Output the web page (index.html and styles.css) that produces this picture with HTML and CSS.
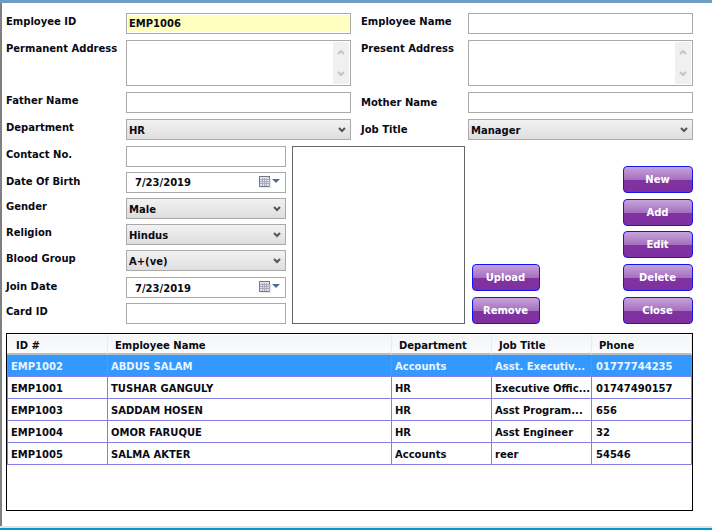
FILE: index.html
```html
<!DOCTYPE html>
<html>

<head>
	<meta charset="utf-8">
	<title>Employee</title>
	<link rel="stylesheet" href="styles.css">
</head>

<body>
	<div class="window">
		<div class="top-edge"></div>

		<div class="content">
			<div class="top-form">
				<label class="lbl">Employee ID</label>
				<input class="field key-field" type="text" value="EMP1006">
				<span></span>
				<label class="lbl">Employee Name</label>
				<input class="field" type="text">

				<label class="lbl">Permanent Address</label>
				<div class="memo">
					<textarea></textarea>
					<div class="memo-scroll">
						<svg width="8" height="6" viewBox="0 0 8 6"><path d="M1 5l3-3 3 3" /></svg>
						<svg width="8" height="6" viewBox="0 0 8 6"><path d="M1 1l3 3 3-3" /></svg>
					</div>
				</div>
				<span></span>
				<label class="lbl">Present Address</label>
				<div class="memo">
					<textarea></textarea>
					<div class="memo-scroll">
						<svg width="8" height="6" viewBox="0 0 8 6"><path d="M1 5l3-3 3 3" /></svg>
						<svg width="8" height="6" viewBox="0 0 8 6"><path d="M1 1l3 3 3-3" /></svg>
					</div>
				</div>

				<label class="lbl">Father Name</label>
				<input class="field" type="text">
				<span></span>
				<label class="lbl lbl-low">Mother Name</label>
				<input class="field" type="text">

				<label class="lbl">Department</label>
				<div class="combo">
					<select><option>HR</option></select>
					<svg class="chev" width="8" height="6" viewBox="0 0 8 6"><path d="M1 1l3 3 3-3" /></svg>
				</div>
				<span></span>
				<label class="lbl lbl-low">Job Title</label>
				<div class="combo">
					<select><option>Manager</option></select>
					<svg class="chev" width="8" height="6" viewBox="0 0 8 6"><path d="M1 1l3 3 3-3" /></svg>
				</div>
			</div>

			<div class="lower">
				<div class="fields">
					<div class="row">
						<label class="lbl">Contact No.</label>
						<input class="field" type="text">
					</div>
					<div class="row">
						<label class="lbl lbl-mid">Date Of Birth</label>
						<div class="date">
							<input type="text" value="7/23/2019">
							<svg class="cal" width="21" height="12" viewBox="0 0 21 12">
								<rect x="0.5" y="0.5" width="10" height="10" fill="#e4e6ee" stroke="#77777c" />
								<path class="cal-grid" d="M1 3.5h9M1 5.5h9M1 7.5h9M3.5 2v8M5.5 2v8M7.5 2v8" />
								<path d="M11 3v9H2" fill="none" stroke="#d4d4d4" />
								<path d="M13 3h8l-4 4z" fill="#4f6d9c" />
							</svg>
						</div>
					</div>
					<div class="row">
						<label class="lbl">Gender</label>
						<div class="combo">
							<select><option>Male</option></select>
							<svg class="chev" width="8" height="6" viewBox="0 0 8 6"><path d="M1 1l3 3 3-3" /></svg>
						</div>
					</div>
					<div class="row">
						<label class="lbl">Religion</label>
						<div class="combo">
							<select><option>Hindus</option></select>
							<svg class="chev" width="8" height="6" viewBox="0 0 8 6"><path d="M1 1l3 3 3-3" /></svg>
						</div>
					</div>
					<div class="row">
						<label class="lbl">Blood Group</label>
						<div class="combo">
							<select><option>A+(ve)</option></select>
							<svg class="chev" width="8" height="6" viewBox="0 0 8 6"><path d="M1 1l3 3 3-3" /></svg>
						</div>
					</div>
					<div class="row row-join">
						<label class="lbl lbl-mid">Join Date</label>
						<div class="date">
							<input type="text" value="7/23/2019">
							<svg class="cal" width="21" height="12" viewBox="0 0 21 12">
								<rect x="0.5" y="0.5" width="10" height="10" fill="#e4e6ee" stroke="#77777c" />
								<path class="cal-grid" d="M1 3.5h9M1 5.5h9M1 7.5h9M3.5 2v8M5.5 2v8M7.5 2v8" />
								<path d="M11 3v9H2" fill="none" stroke="#d4d4d4" />
								<path d="M13 3h8l-4 4z" fill="#4f6d9c" />
							</svg>
						</div>
					</div>
					<div class="row">
						<label class="lbl">Card ID</label>
						<input class="field" type="text">
					</div>
				</div>

				<div class="photo"></div>

				<div class="photo-buttons">
					<button class="btn">Upload</button>
					<button class="btn">Remove</button>
				</div>

				<div class="action-buttons">
					<button class="btn">New</button>
					<button class="btn">Add</button>
					<button class="btn btn-edit">Edit</button>
					<button class="btn">Delete</button>
					<button class="btn">Close</button>
				</div>
			</div>

			<div class="grid-box">
				<table class="grid">
					<colgroup>
						<col class="col-id">
						<col class="col-name">
						<col class="col-dept">
						<col class="col-job">
						<col class="col-phone">
					</colgroup>
					<thead>
						<tr>
							<th>ID #</th>
							<th>Employee Name</th>
							<th>Department</th>
							<th>Job Title</th>
							<th>Phone</th>
						</tr>
					</thead>
					<tbody>
						<tr class="selected">
							<td>EMP1002</td>
							<td>ABDUS SALAM</td>
							<td>Accounts</td>
							<td>Asst. Executiv...</td>
							<td>01777744235</td>
						</tr>
						<tr>
							<td>EMP1001</td>
							<td>TUSHAR GANGULY</td>
							<td>HR</td>
							<td>Executive Offic...</td>
							<td>01747490157</td>
						</tr>
						<tr>
							<td>EMP1003</td>
							<td>SADDAM HOSEN</td>
							<td>HR</td>
							<td>Asst Program...</td>
							<td>656</td>
						</tr>
						<tr>
							<td>EMP1004</td>
							<td>OMOR FARUQUE</td>
							<td>HR</td>
							<td>Asst Engineer</td>
							<td>32</td>
						</tr>
						<tr>
							<td>EMP1005</td>
							<td>SALMA AKTER</td>
							<td>Accounts</td>
							<td>reer</td>
							<td>54546</td>
						</tr>
					</tbody>
				</table>
			</div>
		</div>

		<div class="bottom-edge"></div>
	</div>
</body>

</html>
```

FILE: styles.css
```css
* {
	box-sizing: border-box;
}

body {
	margin: 0;
	background: #fff;
	font-family: "DejaVu Sans", sans-serif;
	font-size: 10px;
	font-weight: bold;
	color: #0a0a14;
	overflow: hidden;
}

input,
select,
textarea,
button {
	font: inherit;
	color: inherit;
	margin: 0;
	outline: none;
}

.window {
	height: 530px;
	display: flex;
	flex-direction: column;
}

.top-edge {
	height: 3px;
	background: #6f9dc0;
}

.content {
	flex: 1;
	padding: 10px 19px 0 4px;
	border-left: 2px solid #808080;
}

.bottom-edge {
	height: 4px;
	border-top: 2px solid #e2e2e2;
	background: #0a98c6;
}

.top-form {
	display: grid;
	grid-template-columns: 120px 225px 10px 107px 225px;
	grid-template-rows: 21px 46px 21px 21px;
	row-gap: 6px;
}

.lbl {
	display: block;
	padding-top: 2px;
	line-height: 14px;
}

.lbl-low {
	padding-top: 4px;
}

.lbl-mid {
	padding-top: 3px;
}

.field {
	width: 100%;
	height: 21px;
	padding: 0 2px;
	border: 1px solid #aaa;
	background: #fff;
}

.key-field {
	background: #ffffc0;
	border-color: #aaa;
	box-shadow: inset 0 0 0 1px #fff;
}

.memo {
	display: flex;
	border: 1px solid #aaa;
	padding: 1px;
}

.memo textarea {
	flex: 1;
	min-width: 0;
	border: 0;
	padding: 0;
	resize: none;
}

.memo-scroll {
	width: 16px;
	padding: 7px 0;
	display: flex;
	flex-direction: column;
	justify-content: space-between;
	align-items: center;
	background: #f0f0f0;
}

.memo-scroll path {
	fill: none;
	stroke: #c4c4c4;
	stroke-width: 2;
}

.combo {
	position: relative;
	height: 21px;
}

.combo select {
	width: 100%;
	height: 100%;
	padding: 2px 0 0 2px;
	border: 1px solid #aaa;
	border-radius: 0;
	background: linear-gradient(#f2f2f2, #dedede);
	appearance: none;
}

.chev {
	position: absolute;
	top: 8px;
	right: 5px;
	pointer-events: none;
}

.chev path {
	fill: none;
	stroke: #555;
	stroke-width: 2;
}

.lower {
	display: flex;
	margin-top: 6px;
}

.fields {
	width: 280px;
	display: flex;
	flex-direction: column;
	gap: 5px;
}

.row {
	display: grid;
	grid-template-columns: 120px 160px;
	height: 21px;
}

.row-join {
	margin-top: 1px;
}

.row-join input {
	padding-top: 2px;
}

.date {
	display: flex;
	align-items: center;
	height: 21px;
	padding-right: 5px;
	border: 1px solid #aaa;
}

.date input {
	flex: 1;
	min-width: 0;
	border: 0;
	padding-left: 8px;
	padding-right: 0;
}

.cal {
	margin-bottom: 1px;
}

.cal-grid {
	fill: none;
	stroke: #a8acbc;
}

.photo {
	width: 173px;
	margin-left: 6px;
	border: 1px solid #666;
}

.photo-buttons,
.action-buttons {
	display: flex;
	flex-direction: column;
	justify-content: flex-end;
	gap: 6px;
}

.photo-buttons {
	width: 68px;
	margin-left: 7px;
}

.action-buttons {
	width: 70px;
	margin-left: auto;
}

.btn {
	height: 27px;
	padding: 0 1px 0 0;
	border: 1px solid #1414ee;
	border-radius: 4px;
	color: #fff;
	background: linear-gradient(#c7a3db, #a46ebd 52%, #8033a0 52%, #7f30a0);
}

.btn-edit {
	margin-top: -1px;
}

.grid-box {
	height: 178px;
	margin-top: 9px;
	padding-top: 1px;
	border: 1px solid #000;
}

.grid {
	width: 685px;
	table-layout: fixed;
	border-collapse: separate;
	border-spacing: 0;
}

.col-id {
	width: 101px;
}

.col-name {
	width: 284px;
}

.col-dept,
.col-job,
.col-phone {
	width: 100px;
}

.grid th {
	height: 20px;
	padding: 2px 0 0 7px;
	text-align: left;
	background: linear-gradient(#f4f5f6, #fbfcfd);
	border-right: 1px solid #e6ecf3;
	border-bottom: 2px solid #b8bcc4;
}

.grid th:first-child {
	padding-left: 9px;
}

.grid td {
	height: 22px;
	padding: 1px 0 0 3px;
	white-space: nowrap;
	overflow: hidden;
	border-right: 1px solid #8480e8;
	border-bottom: 1px solid #8480e8;
}

.grid td:first-child {
	border-left: 1px solid #8480e8;
}

.grid td:last-child {
	padding-left: 4px;
}

.selected td {
	color: #eaf4ff;
	background: #3399ff;
}
```
